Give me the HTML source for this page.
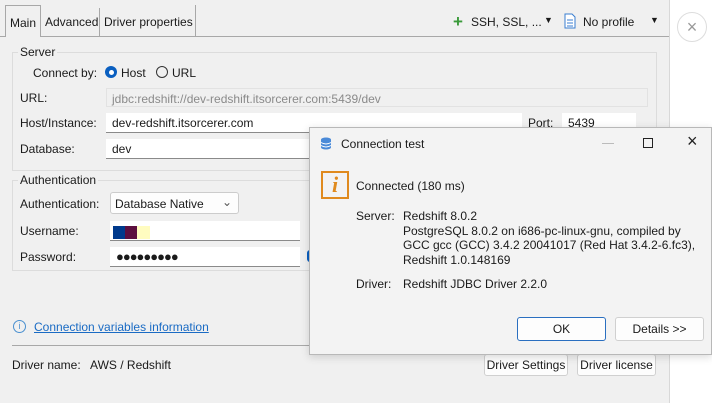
<!DOCTYPE html>
<html><head><style>
*{box-sizing:border-box;margin:0;padding:0}
body{width:712px;height:403px;overflow:hidden;background:#f0f0f0;font:12px "Liberation Sans",sans-serif;color:#1a1a1a;position:relative}
.a{position:absolute;white-space:nowrap}
.f{position:absolute;background:#fff;border-bottom:1px solid #8a8a8a;padding:3px 6px;height:20px}
.btn{position:absolute;background:#fdfdfd;border:1px solid #d0d0d0;border-radius:3px;text-align:center;line-height:20px}
</style></head><body>
<div class="a" style="left:669px;top:0;width:43px;height:403px;background:#fff;border-left:1px solid #d8d8d8"></div>
<div class="a" style="left:677px;top:12px;width:30px;height:30px;border:1px solid #ddd;border-radius:50%;background:#fff;text-align:center;line-height:28px;color:#999;font-size:18px">×</div>
<!-- tabs -->
<div class="a" style="left:0;top:36px;width:669px;border-top:1px solid #a8a8a8"></div>
<div class="a" style="left:5px;top:5px;width:36px;height:32px;background:#f0f0f0;border:1px solid #a8a8a8;border-bottom:none;padding:10px 0 0 4px">Main</div>
<div class="a" style="left:41px;top:8px;width:59px;height:28px;border-right:1px solid #a8a8a8;padding:7px 0 0 4px">Advanced</div>
<div class="a" style="left:100px;top:5px;width:96px;height:31px;border-right:1px solid #a8a8a8;padding:10px 0 0 4px">Driver properties</div>
<div class="a" style="left:453px;top:15px;color:#3a9a3a;font-size:17px;font-weight:bold;line-height:14px">+</div>
<div class="a" style="left:471px;top:15px">SSH, SSL, ...</div>
<div class="a" style="left:544px;top:15px;font-size:9px">▼</div>
<svg class="a" style="left:564px;top:13px" width="12" height="16"><path d="M1 1h7l3 3v11H1z" fill="#fff" stroke="#3a7ed0"/><path d="M3 7h6M3 10h6M3 13h6" stroke="#3a7ed0"/></svg>
<div class="a" style="left:583px;top:15px">No profile</div>
<div class="a" style="left:650px;top:15px;font-size:9px">▼</div>
<!-- server group -->
<div class="a" style="left:12px;top:52px;width:645px;height:119px;border:1px solid #dcdcdc"></div>
<div class="a" style="left:18px;top:45px;background:#f0f0f0;padding:0 2px">Server</div>
<div class="a" style="left:33px;top:66px">Connect by:</div>
<div class="a" style="left:105px;top:66px;width:12px;height:12px;border-radius:50%;background:#0a5fc0"><div style="margin:3.5px;width:5px;height:5px;border-radius:50%;background:#fff"></div></div>
<div class="a" style="left:121px;top:66px">Host</div>
<div class="a" style="left:156px;top:66px;width:12px;height:12px;border-radius:50%;border:1px solid #333"></div>
<div class="a" style="left:172px;top:66px">URL</div>
<div class="a" style="left:20px;top:91px">URL:</div>
<div class="a" style="left:106px;top:88px;width:542px;height:19px;border:1px solid #e2e2e2;padding:3px 5px;color:#8a8a8a">jdbc:redshift://dev-redshift.itsorcerer.com:5439/dev</div>
<div class="a" style="left:20px;top:116px">Host/Instance:</div>
<div class="f" style="left:106px;top:113px;width:416px">dev-redshift.itsorcerer.com</div>
<div class="a" style="left:528px;top:116px">Port:</div>
<div class="f" style="left:562px;top:113px;width:74px">5439</div>
<div class="a" style="left:20px;top:142px">Database:</div>
<div class="f" style="left:106px;top:139px;width:210px">dev</div>
<!-- auth group -->
<div class="a" style="left:12px;top:180px;width:300px;height:91px;border:1px solid #dcdcdc;border-right:none"></div>
<div class="a" style="left:18px;top:173px;background:#f0f0f0;padding:0 2px">Authentication</div>
<div class="a" style="left:20px;top:197px">Authentication:</div>
<div class="a" style="left:110px;top:192px;width:129px;height:22px;background:#fdfdfd;border:1px solid #ccc;border-radius:3px;padding:4px 4px">Database Native<span style="position:absolute;right:6px;top:2px;color:#555">⌄</span></div>
<div class="a" style="left:20px;top:224px">Username:</div>
<div class="f" style="left:110px;top:221px;width:190px"></div>
<div class="a" style="left:113px;top:226px;width:12px;height:13px;background:#003a8c"></div>
<div class="a" style="left:125px;top:226px;width:12px;height:13px;background:#5c0f3f"></div>
<div class="a" style="left:137px;top:226px;width:13px;height:13px;background:#fffcc0"></div>
<div class="a" style="left:20px;top:250px">Password:</div>
<div class="f" style="left:110px;top:247px;width:190px;font-size:13px;line-height:13px;letter-spacing:-1px">●●●●●●●●●</div>
<div class="a" style="left:307px;top:250px;width:5px;height:12px;background:#0a5fc0;border-radius:3px 0 0 3px"></div>
<div class="a" style="left:13px;top:320px;width:13px;height:13px;border:1px solid #4a90d0;border-radius:50%;color:#4a90d0;font-size:9px;text-align:center;line-height:11px">i</div>
<div class="a" style="left:34px;top:320px;color:#1a6bc4;text-decoration:underline">Connection variables information</div>
<div class="a" style="left:12px;top:345px;width:300px;border-top:1px solid #a8a8a8"></div>
<div class="a" style="left:12px;top:358px">Driver name:&nbsp;&nbsp; AWS / Redshift</div>
<div class="btn" style="left:484px;top:354px;width:84px;height:22px">Driver Settings</div>
<div class="btn" style="left:577px;top:354px;width:79px;height:22px">Driver license</div>
<!-- dialog -->
<div class="a" style="left:309px;top:127px;width:403px;height:228px;background:#f3f3f3;border:1px solid #b8b8b8;box-shadow:0 2px 8px rgba(0,0,0,.15)">
<svg class="a" style="left:10px;top:9px" width="12" height="13"><ellipse cx="6" cy="2.5" rx="5" ry="2" fill="#4a8ad8"/><rect x="1" y="2.5" width="10" height="8" fill="#4a8ad8"/><ellipse cx="6" cy="10.5" rx="5" ry="2" fill="#4a8ad8"/><path d="M1 5.5q5 3 10 0M1 8.5q5 3 10 0" stroke="#fff" fill="none"/></svg>
<div class="a" style="left:31px;top:9px">Connection test</div>
<div class="a" style="left:292px;top:15px;width:12px;border-top:1px solid #bbb"></div>
<div class="a" style="left:333px;top:10px;width:10px;height:10px;border:1px solid #222"></div>
<div class="a" style="left:377px;top:3px;font-size:18px;color:#222">×</div>
<div class="a" style="left:11px;top:43px;width:28px;height:28px;border:2px solid #e08a1e;color:#e08a1e;font:italic bold 22px 'Liberation Serif',serif;text-align:center;line-height:24px">i</div>
<div class="a" style="left:46px;top:51px">Connected (180 ms)</div>
<div class="a" style="left:46px;top:81px">Server:</div>
<div class="a" style="left:93px;top:81px;line-height:14.7px">Redshift 8.0.2<br>PostgreSQL 8.0.2 on i686-pc-linux-gnu, compiled by<br>GCC gcc (GCC) 3.4.2 20041017 (Red Hat 3.4.2-6.fc3),<br>Redshift 1.0.148169</div>
<div class="a" style="left:46px;top:149px">Driver:</div>
<div class="a" style="left:93px;top:149px">Redshift JDBC Driver 2.2.0</div>
<div class="btn" style="left:207px;top:189px;width:89px;height:24px;border-color:#2a6fc0;line-height:22px">OK</div>
<div class="btn" style="left:305px;top:189px;width:89px;height:24px;line-height:22px">Details &gt;&gt;</div>
</div>
</body></html>
